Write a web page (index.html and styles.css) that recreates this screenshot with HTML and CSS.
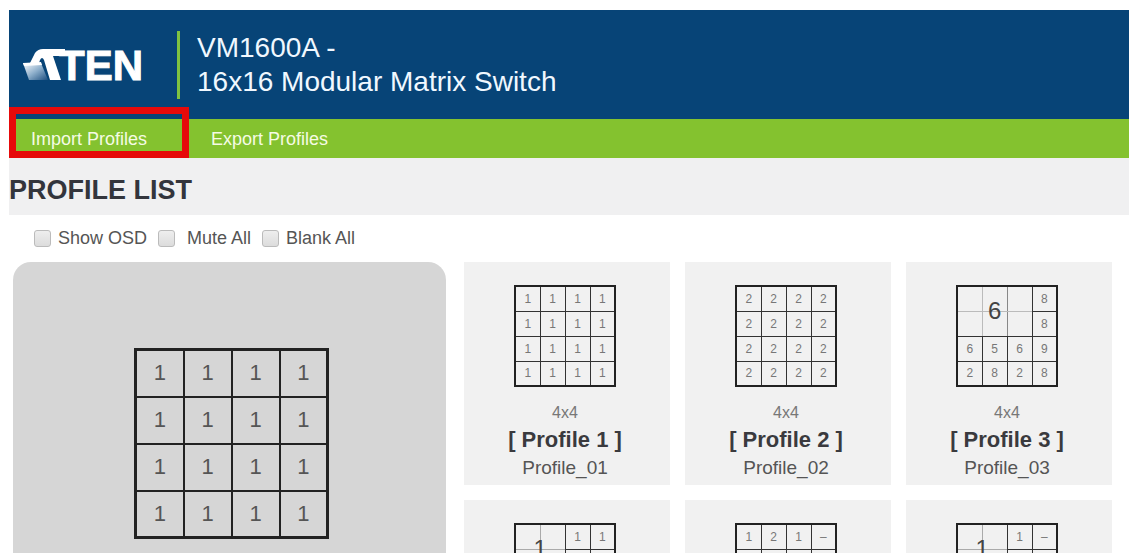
FILE: index.html
```
<!DOCTYPE html>
<html lang="en">
<head>
    <meta charset="UTF-8">
    <title>VM1600A - Profile List</title>
    <link rel="stylesheet" href="styles.css">
</head>
<body>
<header class="header">
    <svg class="logo" width="126" height="56" viewBox="0 -8 126 56" role="img" aria-label="ATEN">
        <defs>
            <linearGradient id="sheet" x1="0" y1="0" x2="1" y2="1">
                <stop offset="0" stop-color="#ffffff"/>
                <stop offset="0.5" stop-color="#8fb0cc"/>
                <stop offset="1" stop-color="#1d4f80"/>
            </linearGradient>
        </defs>
        <text class="logo-text" x="38" y="35">TEN</text>
        <!-- roof and folded sheet of the mark -->
        <path d="M9 18L14 8Q17 4 22 4H44V11H32L40 35H29L23 15Q21 11 19 15L18 18Z" fill="#fff"/>
        <path d="M2 18L20 18L27 35H8Z" fill="url(#sheet)"/>
        <path d="M2 18L20 17L21 20L3 21Z" fill="#fff"/>
    </svg>
    <h1 class="model">VM1600A -<br>16x16 Modular Matrix Switch</h1>
</header>

<nav class="nav">
    <a class="nav-link current" href="#">Import Profiles</a>
    <a class="nav-link" href="#">Export Profiles</a>
</nav>

<h2 class="title">PROFILE LIST</h2>

<form class="options">
    <input type="checkbox" id="osd"><label for="osd">Show OSD</label>
    <input type="checkbox" id="mute"><label class="wide" for="mute">Mute All</label>
    <input type="checkbox" id="blank"><label for="blank">Blank All</label>
</form>

<main class="main">
    <section class="preview">
        <table class="wall big">
            <tr><td>1</td><td>1</td><td>1</td><td>1</td></tr>
            <tr><td>1</td><td>1</td><td>1</td><td>1</td></tr>
            <tr><td>1</td><td>1</td><td>1</td><td>1</td></tr>
            <tr><td>1</td><td>1</td><td>1</td><td>1</td></tr>
        </table>
    </section>

    <ul class="profiles">
        <li class="card">
            <table class="wall">
                <tr><td>1</td><td>1</td><td>1</td><td>1</td></tr>
                <tr><td>1</td><td>1</td><td>1</td><td>1</td></tr>
                <tr><td>1</td><td>1</td><td>1</td><td>1</td></tr>
                <tr><td>1</td><td>1</td><td>1</td><td>1</td></tr>
            </table>
            <p class="size">4x4</p>
            <h3 class="name">[ Profile 1 ]</h3>
            <p class="file">Profile_01</p>
        </li>
        <li class="card">
            <table class="wall">
                <tr><td>2</td><td>2</td><td>2</td><td>2</td></tr>
                <tr><td>2</td><td>2</td><td>2</td><td>2</td></tr>
                <tr><td>2</td><td>2</td><td>2</td><td>2</td></tr>
                <tr><td>2</td><td>2</td><td>2</td><td>2</td></tr>
            </table>
            <p class="size">4x4</p>
            <h3 class="name">[ Profile 2 ]</h3>
            <p class="file">Profile_02</p>
        </li>
        <li class="card">
            <table class="wall">
                <tr><td class="merged three" colspan="3" rowspan="2">6</td><td>8</td></tr>
                <tr><td>8</td></tr>
                <tr><td>6</td><td>5</td><td>6</td><td>9</td></tr>
                <tr><td>2</td><td>8</td><td>2</td><td>8</td></tr>
            </table>
            <p class="size">4x4</p>
            <h3 class="name">[ Profile 3 ]</h3>
            <p class="file">Profile_03</p>
        </li>
        <li class="card">
            <table class="wall">
                <tr><td class="merged two" colspan="2" rowspan="2">1</td><td>1</td><td>1</td></tr>
                <tr><td></td><td></td></tr>
                <tr><td></td><td></td><td></td><td></td></tr>
                <tr><td></td><td></td><td></td><td></td></tr>
            </table>
        </li>
        <li class="card">
            <table class="wall">
                <tr><td>1</td><td>2</td><td>1</td><td>–</td></tr>
                <tr><td></td><td></td><td></td><td></td></tr>
                <tr><td></td><td></td><td></td><td></td></tr>
                <tr><td></td><td></td><td></td><td></td></tr>
            </table>
        </li>
        <li class="card">
            <table class="wall">
                <tr><td class="merged two" colspan="2" rowspan="2">1</td><td>1</td><td>–</td></tr>
                <tr><td></td><td></td></tr>
                <tr><td></td><td></td><td></td><td></td></tr>
                <tr><td></td><td></td><td></td><td></td></tr>
            </table>
        </li>
    </ul>
</main>
</body>
</html>
```
FILE: styles.css
```
* {
    box-sizing: border-box;
    padding: 0;
    margin: 0;
    list-style: none;
}

html {
    background: #fff;
}

body {
    display: flex;
    flex-direction: column;
    height: 100vh;
    padding: 10px 2px 6px 9px;
    overflow: hidden;
    font-family: "Liberation Sans", Arial, sans-serif;
    font-size: 18px;
    color: #555;
}

.header {
    display: flex;
    flex: none;
    align-items: center;
    height: 109px;
    padding-left: 12px;
    background: #074477;
}

.logo {
    overflow: visible;
}

.logo-text {
    font-size: 42px;
    font-weight: bold;
    fill: #fff;
    stroke: #fff;
    stroke-width: 1px;
}

.model {
    margin-left: 30px;
    padding-left: 17px;
    border-left: 3px solid #7fc241;
    font-size: 28px;
    font-weight: normal;
    line-height: 34px;
    color: #f0f8ff;
}

.nav {
    display: flex;
    flex: none;
    height: 39px;
    background: #84c22f;
}

.nav-link {
    position: relative;
    padding: 0 22px;
    line-height: 40px;
    color: #f5fbe4;
    text-decoration: none;
}

.nav-link.current {
    width: 180px;
}

/* red frame reaches up over the header */
.nav-link.current::after {
    content: "";
    position: absolute;
    top: -12px;
    right: 0;
    bottom: 0;
    left: 0;
    border: 7px solid #e60a0a;
}

.title {
    flex: none;
    height: 57px;
    background: #f0f0f1;
    font-size: 27px;
    line-height: 64px;
    color: #33353c;
}

.options {
    display: flex;
    flex: none;
    align-items: center;
    height: 47px;
    padding-left: 25px;
}

.options input {
    appearance: none;
    width: 17px;
    height: 17px;
    margin-right: 7px;
    border: 1px solid #bbb;
    border-radius: 3px;
    background: linear-gradient(#eee, #dcdcdc);
}

.options label {
    margin-right: 11px;
}

.options .wide {
    padding-left: 5px;
}

.main {
    display: flex;
    flex: 1;
    gap: 18px;
    min-height: 0;
    padding-left: 4px;
    overflow: hidden;
}

.preview {
    flex: 0 0 433px;
    padding-top: 86px;
    padding-left: 4px;
    border-radius: 18px 18px 0 0;
    background: #d6d6d6;
}

.profiles {
    display: flex;
    flex: 1;
    flex-wrap: wrap;
    align-content: flex-start;
    gap: 15px;
}

.card {
    width: 206px;
    height: 223px;
    padding-top: 23px;
    padding-right: 4px;
    background: #f1f1f1;
    text-align: center;
}

.wall {
    width: 102px;
    height: 102px;
    margin: 0 auto;
    border: 2px solid #222;
    border-collapse: collapse;
    table-layout: fixed;
    font-size: 12px;
    line-height: 12px;
    text-align: center;
    color: #777;
}

.wall td {
    height: 25px;
    border: 1px solid #333;
}

.wall .merged {
    font-size: 24px;
    line-height: 24px;
    color: #444;
}

/* pale lines of the screens under a merged area */
.wall .three {
    background:
        linear-gradient(#bbb, #bbb) 0 50% / 100% 1px no-repeat,
        linear-gradient(#bbb, #bbb) 33% 0 / 1px 100% no-repeat,
        linear-gradient(#888, #888) 67% 0 / 1px 100% no-repeat;
}

.wall .two {
    background:
        linear-gradient(#aaa, #aaa) 0 50% / 100% 1px no-repeat,
        linear-gradient(#aaa, #aaa) 50% 0 / 1px 100% no-repeat;
}

.wall.big {
    width: 195px;
    height: 190px;
    border-width: 3px;
    font-size: 22px;
    line-height: 22px;
    color: #555;
}

.wall.big td {
    height: 47px;
    border: 2px solid #222;
}

.size {
    margin-top: 16px;
    font-size: 16px;
    line-height: 20px;
    color: #777;
}

.name {
    font-size: 22px;
    line-height: 34px;
    color: #3a3a3e;
}

.file {
    font-size: 19px;
    line-height: 22px;
}
```
